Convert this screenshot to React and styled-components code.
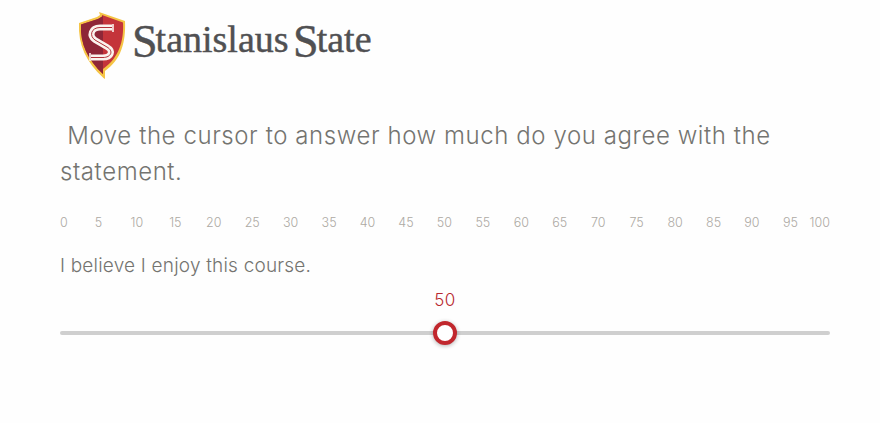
import React from "react";
import styled, { createGlobalStyle } from "styled-components";

const Global = createGlobalStyle`
  html, body { margin: 0; padding: 0; background: #fefefe; }
  body { font-family: Inter, "Open Sans", sans-serif; }
`;

const Page = styled.main`
  width: 880px;
  height: 423px;
  padding: 0 50px 0 60px;
  box-sizing: border-box;
  overflow: hidden;
`;

const Header = styled.header`
  display: flex;
  align-items: flex-start;
  height: 118px;
  padding: 10px 0 0 18px;
  box-sizing: border-box;
  gap: 2px;
`;

const Wordmark = styled.span`
  font-family: "Liberation Serif", serif;
  font-size: 38px;
  line-height: 59px;
  letter-spacing: 0;
  word-spacing: -5px;
  color: #505052;
  white-space: nowrap;
  -webkit-text-stroke: 0.45px #505052;
`;

const BigS = styled.span`
  font-size: 46px;
  line-height: 0;
  vertical-align: -5px;
  letter-spacing: -2px;
`;

const Prompt = styled.h1`
  margin: 0;
  font-size: 24px;
  line-height: 36px;
  font-weight: 300;
  color: #747470;
  white-space: pre-wrap;
  letter-spacing: 0.58px;
`;

const Scale = styled.div`
  display: grid;
  grid-template-columns: 1fr repeat(19, 2fr) 1fr;
  margin-top: 24px;
  font-size: 12.5px;
  line-height: 18px;
  font-weight: 300;
  color: #ada9a3;
`;

const Tick = styled.span`
  text-align: center;
  &:first-child { text-align: left; }
  &:last-child { text-align: right; }
`;

const Statement = styled.p`
  margin: 20px 0 0;
  font-size: 19px;
  line-height: 27px;
  font-weight: 300;
  letter-spacing: 0.2px;
  color: #747470;
`;

const SliderBox = styled.div`
  display: flex;
  flex-direction: column;
  align-items: center;
  margin-top: 9px;
  gap: 19px;
`;

const Bubble = styled.output`
  font-size: 17px;
  line-height: 24px;
  font-weight: 300;
  letter-spacing: 0.4px;
  color: #b8292f;
`;

const Track = styled.div`
  position: relative;
  width: 100%;
  height: 4px;
  border-radius: 2px;
  background: #cfcfcf;
`;

const Thumb = styled.div`
  position: absolute;
  top: 50%;
  width: 24px;
  height: 24px;
  box-sizing: border-box;
  transform: translate(-50%, -50%);
  border: 4.5px solid #c1272d;
  border-radius: 50%;
  background: #fff;
  box-shadow: 0 1px 4px rgba(0, 0, 0, 0.3);
`;

const Logo = () => (
  <svg width="52" height="72" viewBox="0 0 52 72" aria-hidden="true" style={{ flex: "none" }}>
    <path d="M1 13 L19 7 L22 5 L21 2 L47 11 C48 32 43 50 27 61 L27 69 L25.5 68 C8 52 0 35 1 13Z" fill="#f5c445" />
    <path d="M3 14.5 L20 9 L24 6.5 L24 5 L45 12.5 C46 31 41 48 25 59 L25 64 C10 50 2 34 3 14.5Z" fill="#c4343a" />
    <path d="M3 14.5 L20 9 L25 6 L25 64 C10 50 2 34 3 14.5Z" fill="#8e2637" />
    <g fill="none" strokeLinecap="butt">
      <path d="M34 17.5 H22 C13 17.5 11 26 17 30 L29 37 C36 41 33 47.5 25 47.5 H13" stroke="#faf3ee" strokeWidth="6" />
      <path d="M34 17.5 H22 C13 17.5 11 26 17 30 L29 37 C36 41 33 47.5 25 47.5 H13" stroke="#b03038" strokeWidth="1" />
      <path d="M35 14 V22 M12 43 V51" stroke="#faf3ee" strokeWidth="1.6" />
    </g>
  </svg>
);

const labels = Array.from({ length: 21 }, (_, i) => i * 5);

export default function App() {
  const value = 50;
  return (
    <Page>
      <Global />
      <Header>
        <Logo />
        <Wordmark>
          <BigS>S</BigS>tanislaus <BigS>S</BigS>tate
        </Wordmark>
      </Header>
      <Prompt>{" Move the cursor to answer how much do you agree with the statement."}</Prompt>
      <Scale>
        {labels.map((n) => (
          <Tick key={n}>{n}</Tick>
        ))}
      </Scale>
      <Statement>I believe I enjoy this course.</Statement>
      <SliderBox>
        <Bubble>{value}</Bubble>
        <Track>
          <Thumb style={{ left: `${value}%` }} />
        </Track>
      </SliderBox>
    </Page>
  );
}
